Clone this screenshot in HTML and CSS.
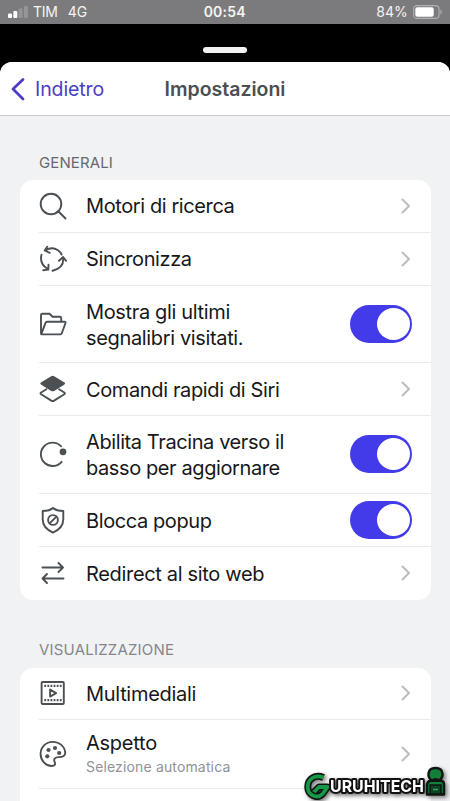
FILE: index.html
```html
<!DOCTYPE html>
<html lang="it">
<head>
<meta charset="utf-8">
<title>Impostazioni</title>
<link rel="stylesheet" href="styles.css">
</head>
<body>
<div class="status">
  <svg class="signal" width="22" height="12" viewBox="0 0 22 12" fill="#fff"><rect x="0" y="7.500" width="4" height="4.500" rx="1"/><rect x="5.300" y="5" width="4" height="7" rx="1"/><rect x="10.600" y="2.500" width="4" height="9.500" rx="1" opacity=".2"/><rect x="15.900" y="0" width="4" height="12" rx="1" opacity=".2"/></svg>
  <span class="carrier">TIM</span><span class="network">4G</span>
  <span class="clock">00:54</span>
  <span class="percent">84%</span>
  <svg class="battery" width="30" height="14" viewBox="0 0 30 14"><rect x=".6" y=".6" width="25.400" height="12.800" rx="3.500" fill="none" stroke="#b2b2b3" stroke-width="1.100"/><rect x="2.300" y="2.300" width="18.400" height="9.400" rx="2" fill="#fff"/><path d="M27.500 4.500c1.700.8 1.700 4.200 0 5z" fill="#b4b4b5"/></svg>
</div>
<div class="backdrop"><div class="handle"></div></div>
<main class="sheet">
  <header class="header">
    <a class="back"><svg width="16" height="24" viewBox="0 0 16 24"><path d="M13 2.500 3 12l10 10" fill="none" stroke="#4b3dc6" stroke-width="2.800" stroke-linecap="round" stroke-linejoin="round"/></svg><span>Indietro</span></a>
    <h1>Impostazioni</h1>
  </header>
  <h2 class="label">GENERALI</h2>
  <section class="card">
    <div class="row">
      <svg class="icon" viewBox="0 0 28 28"><circle cx="12" cy="12" r="10.300"/><path d="m19.500 19.500 7 7"/></svg>
      <span class="title t-search">Motori di ricerca</span><svg class="chevron" viewBox="0 0 10 16"><path d="m1.500 1.500 6.500 6.500-6.500 6.500"/></svg>
    </div>
    <div class="row r-sync">
      <svg class="icon" viewBox="0 0 28 28"><path d="M6.200 5.400Q13 1.300 19 5.200 21.600 7 22.600 9.600M8.200 1.800 5.700 5.500l5 2.300M24.200 12.500Q25.300 23 13.500 25.700M20 15.800l4.100-3.800 3 3.800M2.500 9.700Q.2 18.500 8.600 24M9.500 19.600l-.2 5-5.100.6"/></svg>
      <span class="title t-sync">Sincronizza</span><svg class="chevron" viewBox="0 0 10 16"><path d="m1.500 1.500 6.500 6.500-6.500 6.500"/></svg>
    </div>
    <div class="row r-bookmarks">
      <svg class="icon" viewBox="0 0 28 28"><path d="M2 23V5q0-1.200 1.200-1.200h7.300l3 2.900h7.300q1.400 0 1.400 1.400v3.600M2.200 24.300 6.500 12.900q.4-1.200 1.600-1.200h17.500q1.300 0 .9 1.300l-3.700 10.200q-.4 1.200-1.700 1.200H3.200Q1.600 24.400 2.200 22.800z"/></svg>
      <span class="title t-marks">Mostra gli ultimi<br>segnalibri visitati.</span><span class="toggle"></span>
    </div>
    <div class="row r-siri">
      <svg class="icon" viewBox="0 0 28 28"><path d="M7.400 14.200 2.100 17.500q-1.200.9 0 1.700l10.200 6.400q1.400.8 2.800 0l10.200-6.400q1.200-.8 0-1.700L20 14.200"/><path class="solid" d="M12.200 1.200q1.500-.9 3 0l9.900 6.100q1.900 1.200 0 2.400l-9.900 6.200q-1.500.9-3 0L2.300 9.700q-1.900-1.200 0-2.400z"/></svg>
      <span class="title t-siri">Comandi rapidi di Siri</span><svg class="chevron" viewBox="0 0 10 16"><path d="m1.500 1.500 6.500 6.500-6.500 6.500"/></svg>
    </div>
    <div class="row r-refresh">
      <svg class="icon" viewBox="0 0 28 28"><path d="M22 6.200A11.700 11.700 0 1 0 22.600 21.800"/><circle class="solid" cx="24" cy="11.800" r="3.400"/></svg>
      <span class="title t-refresh">Abilita Tracina verso il<br>basso per aggiornare</span><span class="toggle"></span>
    </div>
    <div class="row r-popup">
      <svg class="icon" viewBox="0 0 28 28"><path d="M14 2q-3.300 3-10.300 3v8.300c0 6.800 4 10.600 10.300 13.300 6.300-2.700 10.300-6.500 10.300-13.300V5Q17.300 5 14 2z"/><circle cx="14" cy="14" r="4.900"/><path d="m10.800 17.200 6.400-6.400"/></svg>
      <span class="title t-popup">Blocca popup</span><span class="toggle"></span>
    </div>
    <div class="row r-redirect">
      <svg class="icon" viewBox="0 0 28 28"><path d="M3.500 8.500h20M19.500 4l4.500 4.500-4.500 4.500M24.500 19.500h-20M8 15l-4.500 4.500L8 24"/></svg>
      <span class="title t-redirect">Redirect al sito web</span><svg class="chevron" viewBox="0 0 10 16"><path d="m1.500 1.500 6.500 6.500-6.500 6.500"/></svg>
    </div>
  </section>
  <h2 class="label second">VISUALIZZAZIONE</h2>
  <section class="card">
    <div class="row r-media">
      <svg class="icon" viewBox="0 0 28 28"><rect x="2.600" y="3" width="22.200" height="22" rx="1"/><path class="film" d="M5.300 6.900h18M5.300 21.100h18"/><path d="M11.100 10.600v7l6-3.500z"/></svg>
      <span class="title t-media">Multimediali</span><svg class="chevron" viewBox="0 0 10 16"><path d="m1.500 1.500 6.500 6.500-6.500 6.500"/></svg>
    </div>
    <div class="row r-aspect">
      <svg class="icon" viewBox="0 0 28 28"><path d="M13.600 1.900A12 12 0 0 0 1.600 14c0 6.500 5 12 11 12 3.600 0 4-2 3.200-3.600-1.600-3.200.1-5.300 3.700-5.300 4.400 0 6.700-1 6.700-3.800C26.200 6.800 20.700 1.900 13.600 1.900z"/><g class="solid"><circle cx="9.500" cy="10" r="2.100"/><circle cx="16" cy="8" r="2.100"/><circle cx="20.200" cy="13" r="2.100"/><circle cx="8.300" cy="16.300" r="2.100"/></g></svg>
      <span class="title t-aspect">Aspetto<small>Selezione automatica</small></span><svg class="chevron" viewBox="0 0 10 16"><path d="m1.500 1.500 6.500 6.500-6.500 6.500"/></svg>
    </div>
    <div class="row"></div>
  </section>
</main>
<svg class="watermark" width="147" height="35" viewBox="0 0 147 35">
  <g fill="none" stroke-linejoin="round"><path d="M20.500 11.500C12 8 4.500 13 4.800 21.500 5 29 14 33.500 19.500 28l5-7H16l-5 5" stroke="#101513" stroke-width="7"/><path d="M20.500 11.500C12 8 4.500 13 4.800 21.500 5 29 14 33.500 19.500 28l5-7H16l-5 5" stroke="#169947" stroke-width="3.800"/></g>
  <text class="brand" x="27" y="25.500" textLength="94" lengthAdjust="spacingAndGlyphs">URUHITECH</text>
  <path d="M124 28.500V18q1-3.500 5-3.500-4-2.500-3.500-7Q126 2 132.500 2t7 5.500q.4 4.500-3.500 7 5 0 5 3.500v10.500z" fill="#128039" stroke="#101513" stroke-width="2.400" stroke-linejoin="round"/>
  <path d="M128 13.500q4.500-3 9 0v2.500h-9z" fill="#101513"/><path d="M127 28v-9h11v9z" fill="#0d4323" stroke="#101513" stroke-width="1.500"/><path d="M130 23.500h5" stroke="#31a864" stroke-width="1.500"/>
</svg>
</body>
</html>
```
FILE: styles.css
```css
* { box-sizing: border-box; }
body { margin: 0; height: 801px; overflow: hidden; position: relative; background: #000; font-family: Inter, "Liberation Sans", sans-serif; }
.status { height: 24px; padding: 0 7px; background: #7b7b7d; color: #f4f4f4; display: flex; align-items: center; font-size: 14px; line-height: 26px; }
.signal { margin: 0 3px 0 1px; flex: none; }
.carrier { width: 35px; letter-spacing: -.3px; }
.network { width: 137px; }
.clock { width: 174px; font-weight: 600; letter-spacing: .2px; }
.percent { width: 37px; }
.battery { flex: none; }
.backdrop { height: 38px; padding-top: 23px; background: #000; }
.handle { width: 44px; height: 6px; margin: 0 auto; border-radius: 3px; background: #f1f1f2; }
.sheet { height: 739px; overflow: hidden; border-radius: 12px 12px 0 0; background: #f1f2f4; }
.header { height: 54px; padding: 0 10px; display: grid; grid-template-columns: 1fr auto 1fr; align-items: center; background: #fff; border-bottom: 1px solid #c9c9cb; }
.back { display: flex; align-items: center; gap: 9px; color: #4b3dc6; font-size: 19.500px; letter-spacing: -.1px; }
h1 { margin: 0; font-size: 19.500px; font-weight: 600; color: #4b4e52; letter-spacing: 0; }
.label { margin: 0; height: 64px; padding: 37px 0 0 39px; color: #67686b; font-size: 15px; line-height: 20px; font-weight: 400; letter-spacing: .1px; }
.second { height: 67.500px; padding-top: 39.500px; color: #858689; letter-spacing: .2px; }
.card { width: 411px; margin-left: 20px; border-radius: 13px; background: #fff; overflow: hidden; }
.row { height: 52.500px; margin-left: 19px; padding-right: 19px; display: flex; align-items: center; border-bottom: 1.500px solid #e9e9eb; }
.row:last-child { border-bottom: 0; }
.r-sync, .r-siri, .r-popup { height: 53px; }
.r-bookmarks { height: 77px; }
.r-refresh { height: 78px; }
.r-redirect { height: 53.500px; }
.r-media { height: 52px; }
.r-aspect { height: 69.500px; }
.icon { width: 28px; height: 28px; margin-right: 19px; flex: none; fill: none; stroke: #4b5054; stroke-width: 1.900; stroke-linecap: round; stroke-linejoin: round; }
.icon .solid { fill: #4b5054; stroke: none; }
.icon .film { stroke-width: 2.400; stroke-linecap: butt; stroke-dasharray: 1.800 1.300; }
.title { flex: 1; padding-top: 1px; color: #171719; font-size: 20px; line-height: 26px; letter-spacing: -.4px; white-space: nowrap; }
.t-marks, .t-refresh, .t-siri, .t-popup { padding-top: 2px; }
.t-siri { letter-spacing: -.37px; }
.t-marks { letter-spacing: -.35px; }
.t-redirect { letter-spacing: -.33px; }
.t-media { letter-spacing: -.3px; }
.t-aspect { letter-spacing: -.25px; padding-top: 1px; }
.title small { display: block; color: #929295; font-size: 14px; line-height: 22px; letter-spacing: .15px; }
.chevron { width: 10px; height: 16px; margin-right: 1px; fill: none; stroke: #bebec1; stroke-width: 2; stroke-linecap: round; stroke-linejoin: round; }
.toggle { width: 62px; height: 38px; padding: 3px 2px; border-radius: 19px; background: #433ae8; display: flex; justify-content: flex-end; flex: none; }
.toggle::after { content: ""; width: 33px; height: 32px; border-radius: 50%; background: #fff; }
.watermark { position: absolute; left: 303px; top: 766px; filter: drop-shadow(2px 2px 2px #777); }
.brand { fill: #fff; stroke: #111; stroke-width: 4px; paint-order: stroke; stroke-linejoin: round; font-family: Inter, sans-serif; font-size: 16px; font-weight: 700; }
```
